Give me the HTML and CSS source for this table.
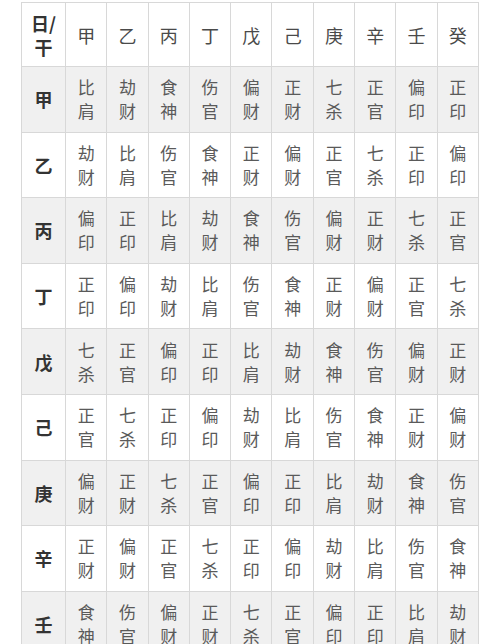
FILE: index.html
```html
<!DOCTYPE html>
<html lang="zh-CN">
<head>
<meta charset="utf-8">
<link rel="stylesheet" href="styles.css">
</head>
<body>
<table class="gods">
  <colgroup><col class="c-first"><col span="10" class="c-data"></colgroup>
  <tr class="head">
    <th class="corner">日/<br>干</th><th>甲</th><th>乙</th><th>丙</th><th>丁</th><th>戊</th><th>己</th><th>庚</th><th>辛</th><th>壬</th><th>癸</th>
  </tr>
  <tr class="alt"><th>甲</th><td>比<br>肩</td><td>劫<br>财</td><td>食<br>神</td><td>伤<br>官</td><td>偏<br>财</td><td>正<br>财</td><td>七<br>杀</td><td>正<br>官</td><td>偏<br>印</td><td>正<br>印</td></tr>
  <tr><th>乙</th><td>劫<br>财</td><td>比<br>肩</td><td>伤<br>官</td><td>食<br>神</td><td>正<br>财</td><td>偏<br>财</td><td>正<br>官</td><td>七<br>杀</td><td>正<br>印</td><td>偏<br>印</td></tr>
  <tr class="alt"><th>丙</th><td>偏<br>印</td><td>正<br>印</td><td>比<br>肩</td><td>劫<br>财</td><td>食<br>神</td><td>伤<br>官</td><td>偏<br>财</td><td>正<br>财</td><td>七<br>杀</td><td>正<br>官</td></tr>
  <tr><th>丁</th><td>正<br>印</td><td>偏<br>印</td><td>劫<br>财</td><td>比<br>肩</td><td>伤<br>官</td><td>食<br>神</td><td>正<br>财</td><td>偏<br>财</td><td>正<br>官</td><td>七<br>杀</td></tr>
  <tr class="alt"><th>戊</th><td>七<br>杀</td><td>正<br>官</td><td>偏<br>印</td><td>正<br>印</td><td>比<br>肩</td><td>劫<br>财</td><td>食<br>神</td><td>伤<br>官</td><td>偏<br>财</td><td>正<br>财</td></tr>
  <tr><th>己</th><td>正<br>官</td><td>七<br>杀</td><td>正<br>印</td><td>偏<br>印</td><td>劫<br>财</td><td>比<br>肩</td><td>伤<br>官</td><td>食<br>神</td><td>正<br>财</td><td>偏<br>财</td></tr>
  <tr class="alt"><th>庚</th><td>偏<br>财</td><td>正<br>财</td><td>七<br>杀</td><td>正<br>官</td><td>偏<br>印</td><td>正<br>印</td><td>比<br>肩</td><td>劫<br>财</td><td>食<br>神</td><td>伤<br>官</td></tr>
  <tr><th>辛</th><td>正<br>财</td><td>偏<br>财</td><td>正<br>官</td><td>七<br>杀</td><td>正<br>印</td><td>偏<br>印</td><td>劫<br>财</td><td>比<br>肩</td><td>伤<br>官</td><td>食<br>神</td></tr>
  <tr class="alt"><th>壬</th><td>食<br>神</td><td>伤<br>官</td><td>偏<br>财</td><td>正<br>财</td><td>七<br>杀</td><td>正<br>官</td><td>偏<br>印</td><td>正<br>印</td><td>比<br>肩</td><td>劫<br>财</td></tr>
</table>
</body>
</html>
```
FILE: styles.css
```css
html, body {
  margin: 0;
  padding: 0;
  background: #ffffff;
}
body {
  padding: 2px 0 0 21px;
  font-family: "Noto Sans CJK SC", "Noto Sans", sans-serif;
}
.gods {
  border-collapse: collapse;
  table-layout: fixed;
  width: 458px;
}
.c-first { width: 44px; }
.gods th, .gods td {
  border: 1px solid #d8d8d8;
  text-align: center;
  vertical-align: middle;
  padding: 0;
  font-size: 17px;
  line-height: 24px;
  color: #5a5a5a;
  font-weight: 400;
}
.gods tr { height: 65.6px; }
.gods tr.head { height: 64px; }
.gods tr.head th { color: #4a4a4a; font-size: 18px; }
.gods tr.head th.corner { font-weight: 700; color: #333; line-height: 24px; }
.gods tr > th:first-child {
  font-weight: 700;
  color: #333333;
  font-size: 18px;
}
.gods tr.alt { background: #f0f0f0; }
```
